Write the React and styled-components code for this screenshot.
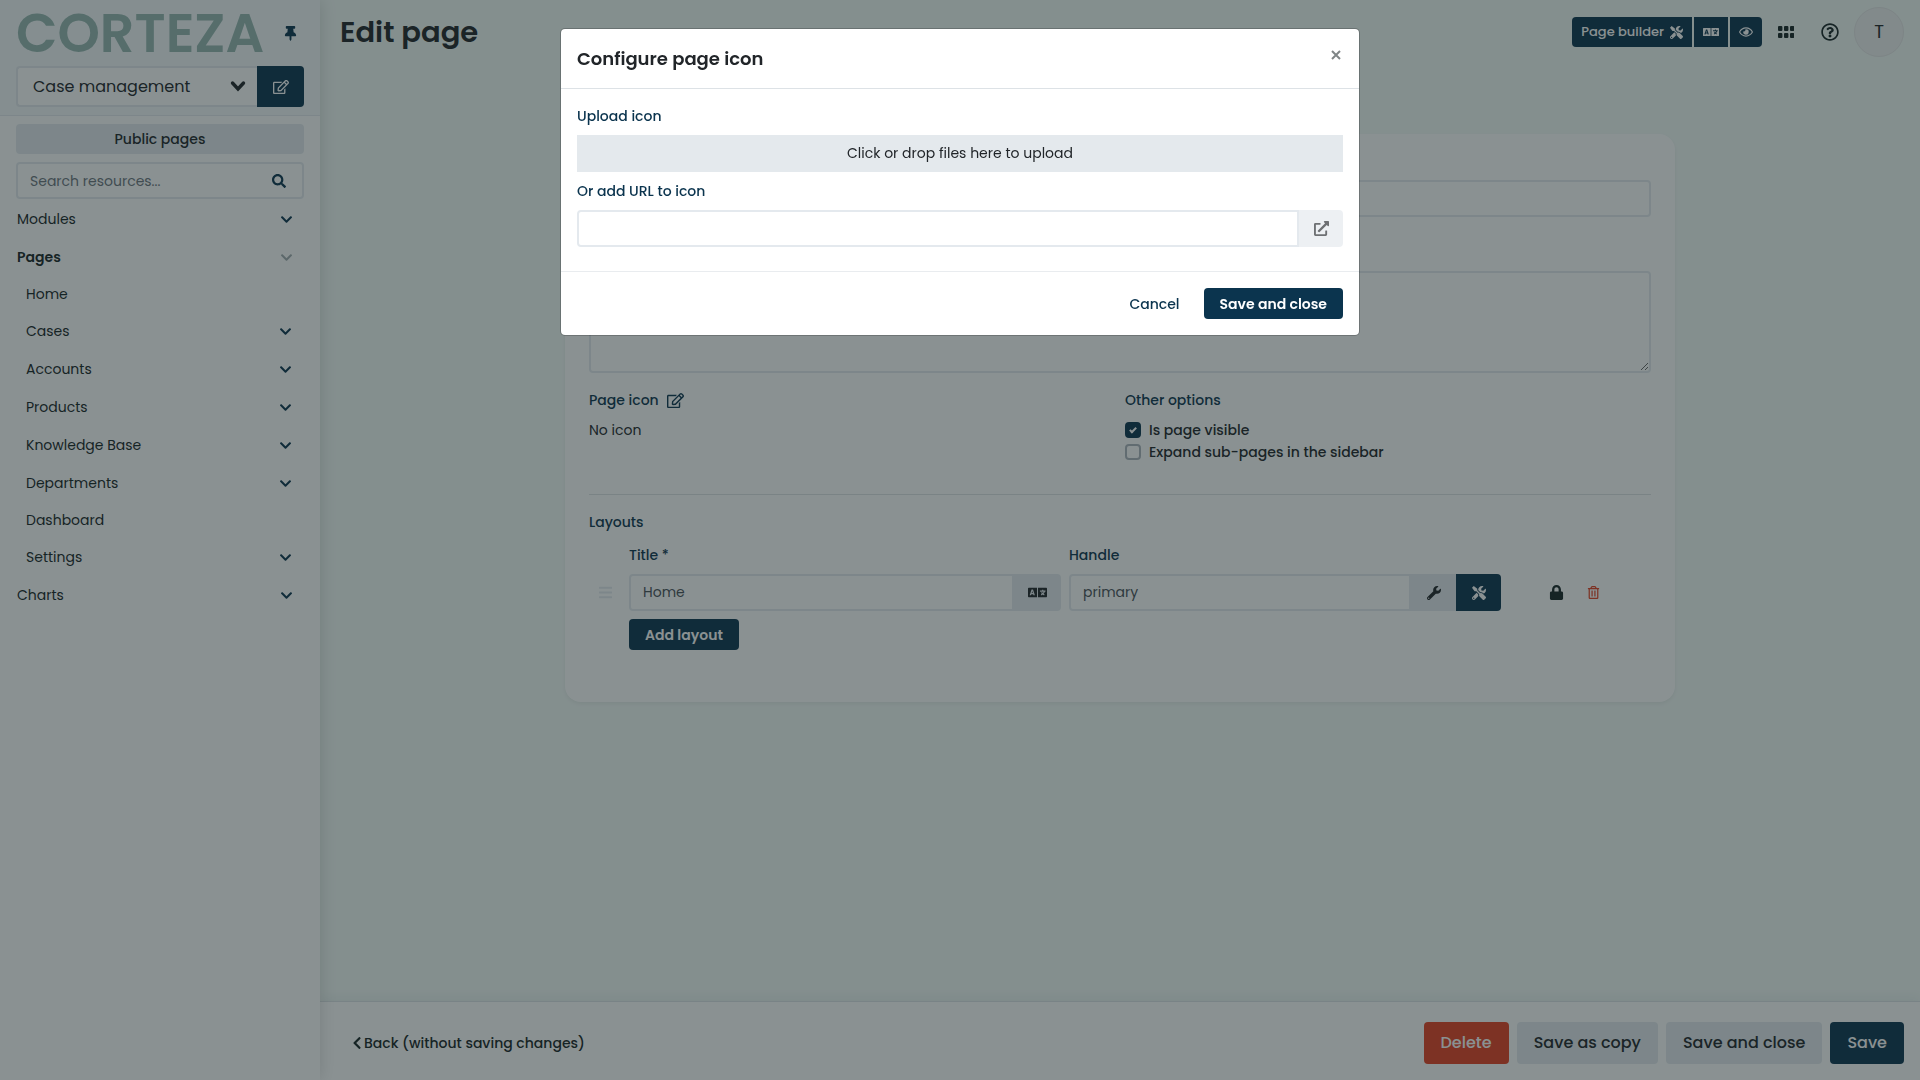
import React, { useState } from "react";
import styled, { createGlobalStyle, css } from "styled-components";
import {
  FaThumbtack,
  FaRegEdit,
  FaChevronDown,
  FaChevronLeft,
  FaLanguage,
  FaTools,
  FaRegEye,
  FaRegQuestionCircle,
  FaSearch,
  FaBars,
  FaWrench,
  FaLock,
  FaRegTrashAlt,
  FaExternalLinkAlt,
} from "react-icons/fa";

const c = {
  primary: "#0b344e",
  danger: "#e54122",
  ink: "#162425",
  text: "#212529",
  border: "#e4e9ee",
  soft: "#e4e9ed",
  white: "#ffffff",
  body: "#f3faf7",
  head: "#f4f8fb",
  logo: "#96b7b0",
};

const Global = createGlobalStyle`
  *, *::before, *::after { box-sizing: border-box; }
  body {
    margin: 0;
    background: ${c.body};
    color: ${c.text};
    font: 400 14px/22px Poppins, Inter, sans-serif;
  }
  button, input, select, textarea { font: inherit; color: inherit; }
  button { cursor: pointer; }
  svg { display: block; flex: none; }
`;

const Shell = styled.div`
  display: grid;
  grid-template-columns: 320px minmax(0, 1fr);
  min-height: 100vh;
`;

/* Sidebar */
const Sidebar = styled.aside`
  background: ${c.white};
  box-shadow: 0 0 16px rgba(0, 0, 0, 0.15);
  z-index: 1;
`;
const SidebarHead = styled.div`
  padding: 8px 16px;
  background: ${c.head};
  border-bottom: 1px solid ${c.border};
`;
const LogoRow = styled.div`
  display: flex;
  align-items: center;
  justify-content: space-between;
  height: 50px;
  margin-bottom: 8px;
  padding-right: 6px;
`;
const Logo = styled.span`
  color: ${c.logo};
  font-size: 54px;
  font-weight: 600;
  line-height: 50px;
`;
const PlainButton = styled.button`
  display: inline-flex;
  align-items: center;
  justify-content: center;
  padding: 0;
  border: 0;
  background: none;
  color: ${(p) => p.$color || c.primary};
  font-size: ${(p) => p.$size || 15}px;
`;
const CloseButton = styled(PlainButton)`
  padding: 5px 2px;
`;
const Group = styled.div`
  display: flex;
  flex: 1;
  min-width: 0;
`;
const SelectWrap = styled.div`
  position: relative;
  flex: 1;
  svg {
    position: absolute;
    right: 11px;
    top: 14px;
    pointer-events: none;
  }
`;
const Select = styled.select`
  appearance: none;
  display: block;
  width: 100%;
  height: 41px;
  padding: 0 15px;
  border: 2px solid ${c.border};
  border-right: 0;
  border-radius: 4px 0 0 4px;
  background: ${c.white};
  font-size: 16px;
`;
const SidebarBody = styled.div`
  display: flex;
  flex-direction: column;
  gap: 8px;
  padding: 8px 16px;
`;
const PublicButton = styled.button`
  height: 30px;
  border: 0;
  border-radius: 4px;
  background: ${c.border};
  font-weight: 500;
`;
const SearchBox = styled.div`
  display: flex;
  align-items: center;
  height: 37px;
  padding: 0 16px 0 12px;
  border: 2px solid ${c.border};
  border-radius: 4px;
  color: ${c.primary};
  input {
    flex: 1;
    min-width: 0;
    padding: 0;
    border: 0;
    outline: 0;
    background: none;
  }
  input::placeholder { color: #6c757d; opacity: 1; }
`;
const Tree = styled.ul`
  margin: -7px 0 0;
  padding: 0;
  list-style: none;
`;
const TreeRow = styled.li`
  display: flex;
  align-items: center;
  justify-content: space-between;
  height: ${(p) => (p.$leaf ? 36 : 38)}px;
  padding: 0 ${(p) => (p.$nested ? 12 : 11)}px 0 ${(p) => (p.$nested ? 10 : 1)}px;
  a {
    color: ${c.ink};
    font-weight: ${(p) => (p.$active ? 600 : 400)};
    text-decoration: none;
  }
`;

/* Main area */
const Main = styled.div`
  display: flex;
  flex-direction: column;
  min-width: 0;
`;
const TopBar = styled.header`
  display: flex;
  align-items: center;
  height: 64px;
  padding: 0 16px 0 20px;
`;
const PageTitle = styled.h1`
  flex: 1;
  margin: 0;
  font-size: 29px;
  font-weight: 600;
  line-height: 40px;
`;
const Tools = styled.div`
  display: flex;
  gap: 2px;
  margin-right: 16px;
  button:first-child { border-radius: 4px 0 0 4px; }
  button:last-child { border-radius: 0 4px 4px 0; }
`;
const ToolButton = styled.button`
  display: flex;
  align-items: center;
  gap: 6px;
  height: 30px;
  padding: 0 9px;
  border: 0;
  background: ${c.primary};
  color: ${c.white};
  font-size: 13px;
  font-weight: 500;
`;
const TopIcons = styled.div`
  display: flex;
  align-items: center;
  gap: 27px;
`;
const Avatar = styled.button`
  width: 50px;
  height: 50px;
  margin-left: -12px;
  border: 1px solid #e4e6e6;
  border-radius: 50%;
  background: #eff0f0;
  font-size: 18px;
`;
const Content = styled.main`
  flex: 1;
  padding: 70px 16px 24px;
`;
const Card = styled.section`
  max-width: 1110px;
  margin: 0 auto;
  padding: 16px 24px 52px;
  border-radius: 16px;
  background: ${c.white};
  box-shadow: 0 2px 4px rgba(0, 0, 0, 0.06);
`;
const Label = styled.label`
  display: flex;
  align-items: center;
  gap: 8px;
  margin-bottom: 8px;
  color: ${c.primary};
  font-weight: 500;
`;
const field = css`
  display: block;
  width: 100%;
  min-width: 0;
  padding: 0 12px;
  border: 2px solid ${c.border};
  border-radius: 4px;
  outline: 0;
  background: ${c.white};
  color: #495057;
`;
const Input = styled.input`
  ${field}
  height: 37px;
  ${(p) => p.$joined && css`
    flex: 1;
    width: auto;
    border-radius: 4px 0 0 4px;
  `}
`;
const TextArea = styled.textarea`
  ${field}
  height: 102px;
  resize: vertical;
`;
const Field = styled.div`
  margin-bottom: ${(p) => p.$gap}px;
`;
const Addon = styled.button`
  display: flex;
  align-items: center;
  justify-content: center;
  width: ${(p) => p.$width}px;
  padding: 0;
  border: 0;
  border-radius: ${(p) => (p.$last ? "0 4px 4px 0" : "0")};
  background: ${(p) => (p.$primary ? c.primary : c.border)};
  color: ${(p) => (p.$primary ? c.white : c.text)};
  opacity: ${(p) => (p.disabled ? 0.65 : 1)};
`;
const Columns = styled.div`
  display: grid;
  grid-template-columns: 1fr 1fr;
  column-gap: 10px;
`;
const CheckLabel = styled.label`
  display: flex;
  align-items: center;
  gap: 8px;
  font-weight: 500;
`;
const CheckBox = styled.input`
  appearance: none;
  display: grid;
  place-items: center;
  width: 16px;
  height: 16px;
  margin: 0;
  border: 2px solid #adb5bd;
  border-radius: 4px;
  &:checked {
    border-color: ${c.primary};
    background: ${c.primary};
  }
  &:checked::after {
    content: "";
    width: 4px;
    height: 7px;
    margin-bottom: 2px;
    border: solid ${c.white};
    border-width: 0 2px 2px 0;
    transform: rotate(45deg);
  }
`;
const Rule = styled.hr`
  margin: 31px 0 16px;
  border: 0;
  border-top: 1px solid #dfe3e5;
`;
const LayoutGrid = styled.div`
  display: grid;
  grid-template-columns: 32px minmax(0, 1fr) minmax(0, 1fr) 142px;
  column-gap: 8px;
  align-items: center;
  margin-top: 11px;
`;
const DragHandle = styled.span`
  display: flex;
  justify-content: center;
  color: ${c.border};
`;
const RowActions = styled.div`
  display: flex;
  align-items: center;
  gap: 23px;
  padding-left: 40px;
`;
const Button = styled.button`
  height: ${(p) => (p.$large ? 42 : 31)}px;
  padding: 0 ${(p) => (p.$large ? 17 : 16)}px;
  border: 0;
  border-radius: 4px;
  font-size: ${(p) => (p.$large ? 16 : 14)}px;
  font-weight: ${(p) => (p.$large || p.$kind === "link" ? 500 : 600)};
  background: ${(p) => ({ primary: c.primary, danger: c.danger, light: c.border, link: "none" })[p.$kind]};
  color: ${(p) => ({ primary: c.white, danger: c.white, light: c.text, link: c.primary })[p.$kind]};
`;
const AddRow = styled.div`
  padding: 8px 0 0 40px;
`;
const Footer = styled.footer`
  display: flex;
  align-items: center;
  gap: 8px;
  height: 79px;
  padding: 4px 16px 0 30px;
  border-top: 1px solid #dde3e6;
  background: ${c.white};
  box-shadow: 0 -4px 10px rgba(11, 52, 78, 0.05);
`;
const BackLink = styled.a`
  display: flex;
  align-items: center;
  margin-right: auto;
  color: ${c.ink};
  font-weight: 500;
  text-decoration: none;
`;

/* Modal */
const Backdrop = styled.div`
  position: fixed;
  inset: 0;
  z-index: 10;
  display: flex;
  align-items: flex-start;
  justify-content: center;
  padding: 28px 16px;
  background: rgba(22, 36, 37, 0.5);
`;
const Dialog = styled.div`
  width: 100%;
  max-width: 800px;
  border: 1px solid rgba(0, 0, 0, 0.2);
  border-radius: 5px;
  background: ${c.white};
  background-clip: padding-box;
`;
const DialogHead = styled.div`
  display: flex;
  align-items: flex-start;
  justify-content: space-between;
  padding: 16px;
  border-bottom: 1px solid #dde2e6;
  h2 {
    margin: 0;
    font-size: 18px;
    font-weight: 600;
    line-height: 27px;
  }
`;
const DialogBody = styled.div`
  padding: 16px 16px 24px;
`;
const DropZone = styled.button`
  display: block;
  width: 100%;
  height: 37px;
  margin-bottom: 8px;
  padding: 0 0 1px;
  border: 0;
  background: ${c.soft};
`;
const DialogFoot = styled.div`
  display: flex;
  justify-content: flex-end;
  gap: 8px;
  padding: 16px;
  border-top: 1px solid #e9ecef;
`;

const ThickChevron = () => (
  <svg width="16" height="12" viewBox="0 0 16 12" fill="none" stroke={c.text} strokeWidth="3.4" strokeLinecap="round">
    <path d="M2.5 3 8 9l5.5-6" />
  </svg>
);
const GridIcon = () => (
  <svg width="16" height="12" viewBox="0 0 16 12" fill={c.ink}>
    {[0, 6, 12].map((x) =>
      [0, 7].map((y) => <rect key={`${x}-${y}`} x={x} y={y} width="4.4" height="5" rx="1" />)
    )}
  </svg>
);
const Cross = () => (
  <svg width="10" height="10" viewBox="0 0 10 10" stroke="#7f8586" strokeWidth="2">
    <path d="m1 1 8 8M9 1 1 9" />
  </svg>
);

const tree = [
  { name: "Modules" },
  { name: "Pages", active: true },
  { name: "Home", nested: true, leaf: true },
  { name: "Cases", nested: true },
  { name: "Accounts", nested: true },
  { name: "Products", nested: true },
  { name: "Knowledge Base", nested: true },
  { name: "Departments", nested: true },
  { name: "Dashboard", nested: true, leaf: true },
  { name: "Settings", nested: true },
  { name: "Charts" },
];

function SidebarPanel() {
  return (
    <Sidebar>
      <SidebarHead>
        <LogoRow>
          <Logo>CORTEZA</Logo>
          <PlainButton aria-label="Unpin sidebar"><FaThumbtack /></PlainButton>
        </LogoRow>
        <Group>
          <SelectWrap>
            <Select aria-label="Namespace" defaultValue="Case management">
              <option>Case management</option>
            </Select>
            <ThickChevron />
          </SelectWrap>
          <Addon $width={47} $primary $last aria-label="Edit namespace"><FaRegEdit size={16} /></Addon>
        </Group>
      </SidebarHead>
      <SidebarBody>
        <PublicButton>Public pages</PublicButton>
        <SearchBox>
          <input type="search" placeholder="Search resources..." aria-label="Search resources" />
          <FaSearch size={14} />
        </SearchBox>
        <Tree>
          {tree.map((t) => (
            <TreeRow key={t.name} $nested={t.nested} $leaf={t.leaf} $active={t.active}>
              <a href="#">{t.name}</a>
              {!t.leaf && (
                <PlainButton aria-label={`Toggle ${t.name}`} $size={13} $color={t.active ? "#a3adb0" : c.primary}>
                  <FaChevronDown />
                </PlainButton>
              )}
            </TreeRow>
          ))}
        </Tree>
      </SidebarBody>
    </Sidebar>
  );
}

function PageForm() {
  const [visible, setVisible] = useState(true);
  const [expand, setExpand] = useState(false);
  return (
    <Card>
      <Field $gap={24}>
        <Label htmlFor="page-title">Title *</Label>
        <Input id="page-title" />
      </Field>
      <Field $gap={16}>
        <Label htmlFor="page-description">Description</Label>
        <TextArea id="page-description" />
      </Field>
      <Columns>
        <div>
          <Label as="div">
            Page icon
            <PlainButton aria-label="Configure page icon" $size={17}><FaRegEdit /></PlainButton>
          </Label>
          No icon
        </div>
        <div>
          <Label as="div">Other options</Label>
          <CheckLabel>
            <CheckBox type="checkbox" checked={visible} onChange={() => setVisible(!visible)} />
            Is page visible
          </CheckLabel>
          <CheckLabel>
            <CheckBox type="checkbox" checked={expand} onChange={() => setExpand(!expand)} />
            Expand sub-pages in the sidebar
          </CheckLabel>
        </div>
      </Columns>
      <Rule />
      <Label as="div">Layouts</Label>
      <LayoutGrid>
        <span />
        <Label htmlFor="layout-title">Title *</Label>
        <Label htmlFor="layout-handle">Handle</Label>
        <span />
        <DragHandle><FaBars size={15} /></DragHandle>
        <Group>
          <Input id="layout-title" $joined defaultValue="Home" />
          <Addon $width={47} $last aria-label="Translations"><FaLanguage size={19} /></Addon>
        </Group>
        <Group>
          <Input id="layout-handle" $joined defaultValue="primary" />
          <Addon $width={45} aria-label="Configure layout"><FaWrench size={14} /></Addon>
          <Addon $width={45} $primary $last aria-label="Layout builder"><FaTools size={14} /></Addon>
        </Group>
        <RowActions>
          <PlainButton aria-label="Permissions" $color={c.ink}><FaLock /></PlainButton>
          <PlainButton aria-label="Delete layout" $color={c.danger} $size={13}><FaRegTrashAlt /></PlainButton>
        </RowActions>
      </LayoutGrid>
      <AddRow><Button $kind="primary">Add layout</Button></AddRow>
    </Card>
  );
}

function IconDialog() {
  return (
    <Backdrop>
      <Dialog role="dialog" aria-modal="true" aria-labelledby="dialog-title">
        <DialogHead>
          <h2 id="dialog-title">Configure page icon</h2>
          <CloseButton aria-label="Close"><Cross /></CloseButton>
        </DialogHead>
        <DialogBody>
          <Label htmlFor="icon-upload">Upload icon</Label>
          <DropZone id="icon-upload">Click or drop files here to upload</DropZone>
          <Label htmlFor="icon-url">Or add URL to icon</Label>
          <Group>
            <Input id="icon-url" $joined />
            <Addon $width={44} $last disabled aria-label="Open link"><FaExternalLinkAlt size={15} /></Addon>
          </Group>
        </DialogBody>
        <DialogFoot>
          <Button $kind="link">Cancel</Button>
          <Button $kind="primary">Save and close</Button>
        </DialogFoot>
      </Dialog>
    </Backdrop>
  );
}

export default function App() {
  return (
    <>
      <Global />
      <Shell>
        <SidebarPanel />
        <Main>
          <TopBar>
            <PageTitle>Edit page</PageTitle>
            <Tools>
              <ToolButton>Page builder <FaTools size={13} /></ToolButton>
              <ToolButton aria-label="Translations"><FaLanguage size={16} /></ToolButton>
              <ToolButton aria-label="View page"><FaRegEye size={14} /></ToolButton>
            </Tools>
            <TopIcons>
              <PlainButton aria-label="Applications"><GridIcon /></PlainButton>
              <PlainButton aria-label="Help" $size={18} $color={c.ink}><FaRegQuestionCircle /></PlainButton>
              <Avatar>T</Avatar>
            </TopIcons>
          </TopBar>
          <Content><PageForm /></Content>
          <Footer>
            <BackLink href="#"><FaChevronLeft size={14} />Back (without saving changes)</BackLink>
            <Button $kind="danger" $large>Delete</Button>
            <Button $kind="light" $large>Save as copy</Button>
            <Button $kind="light" $large>Save and close</Button>
            <Button $kind="primary" $large>Save</Button>
          </Footer>
        </Main>
      </Shell>
      <IconDialog />
    </>
  );
}
